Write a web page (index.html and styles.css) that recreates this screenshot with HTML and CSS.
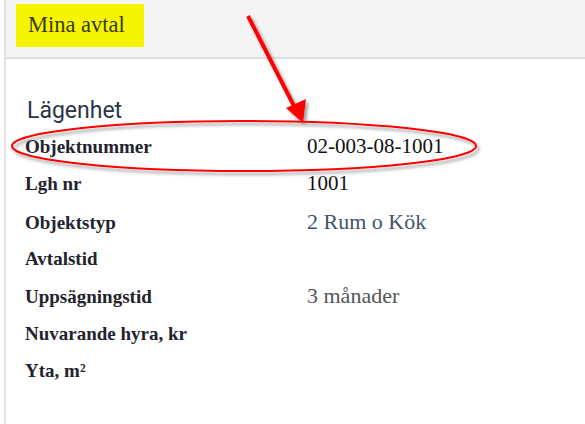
FILE: index.html
```html
<!DOCTYPE html>
<html lang="sv">
  <head>
    <meta charset="UTF-8" />
    <meta name="viewport" content="width=device-width, initial-scale=1.0" />
    <title>Mina avtal</title>
    <link rel="stylesheet" href="styles.css">
  </head>
  <body>
    <div class="panel">
      <div class="panel-header">
        <div class="highlight">Mina avtal</div>
      </div>
      <div class="panel-body">
        <h2>Lägenhet</h2>
        <div class="details">
          <div class="row"><span class="label">Objektnummer</span><span class="value plain">02-003-08-1001</span></div>
          <div class="row"><span class="label">Lgh nr</span><span class="value plain">1001</span></div>
          <div class="row"><span class="label">Objektstyp</span><span class="value type">2 Rum o Kök</span></div>
          <div class="row"><span class="label">Avtalstid</span><span class="value"></span></div>
          <div class="row"><span class="label">Uppsägningstid</span><span class="value muted">3 månader</span></div>
          <div class="row"><span class="label">Nuvarande hyra, kr</span><span class="value"></span></div>
          <div class="row"><span class="label">Yta, m²</span><span class="value"></span></div>
        </div>
      </div>
    </div>

    <!-- annotation drawn on top of the screenshot -->
    <svg class="annotation" width="585" height="424" viewBox="0 0 585 424">
      <defs>
        <filter id="shadow" x="-10%" y="-10%" width="120%" height="140%">
          <feDropShadow dx="2.5" dy="3" stdDeviation="1.6" flood-color="#555" flood-opacity="0.55" />
        </filter>
      </defs>
      <g filter="url(#shadow)">
        <ellipse cx="244" cy="146" rx="232" ry="25" fill="none" stroke="#ff0000" stroke-width="2" />
        <line x1="248" y1="16" x2="294" y2="106" stroke="#ff0000" stroke-width="4" />
        <polygon points="303,123 286,108 306,99" fill="#ff0000" />
      </g>
    </svg>
  </body>
</html>
```

FILE: styles.css
```css
body {
  margin: 0;
  background-color: #fff;
  font-family: 'Liberation Serif', 'Times New Roman', serif;
  color: #222;
}
.panel {
  margin-left: 4px;
  border-left: 2px solid #e2e2e2;
  min-height: 100vh;
}
.panel-header {
  height: 59px;
  background-color: #f4f4f4;
  border-bottom: 2px solid #dedede;
  padding: 4px 0 0 10px;
  box-sizing: border-box;
}
.highlight {
  display: inline-block;
  width: 128px;
  height: 43px;
  box-sizing: border-box;
  padding: 7px 0 0 12px;
  background-color: #f5f500;
  color: #3a3a1a;
  font-size: 22.5px;
  line-height: 28px;
}
.panel-body {
  padding: 37px 0 0 19px;
}
h2 {
  margin: 0 0 2px 2px;
  font-family: Roboto, 'Open Sans', sans-serif;
  font-weight: 400;
  font-size: 23px;
  line-height: 30px;
  color: #2b3544;
}
.row {
  display: flex;
  align-items: baseline;
  height: 37.33px;
  line-height: 37px;
}
.label {
  width: 282px;
  flex-shrink: 0;
  font-weight: bold;
  font-size: 19px;
  color: #23232d;
}
.value {
  font-size: 21px;
}
.value.plain {
  color: #111;
}
.value.type {
  font-size: 22px;
  color: #44536a;
}
.value.muted {
  font-size: 22px;
  color: #555;
}
.annotation {
  position: absolute;
  top: 0;
  left: 0;
  pointer-events: none;
}
```
